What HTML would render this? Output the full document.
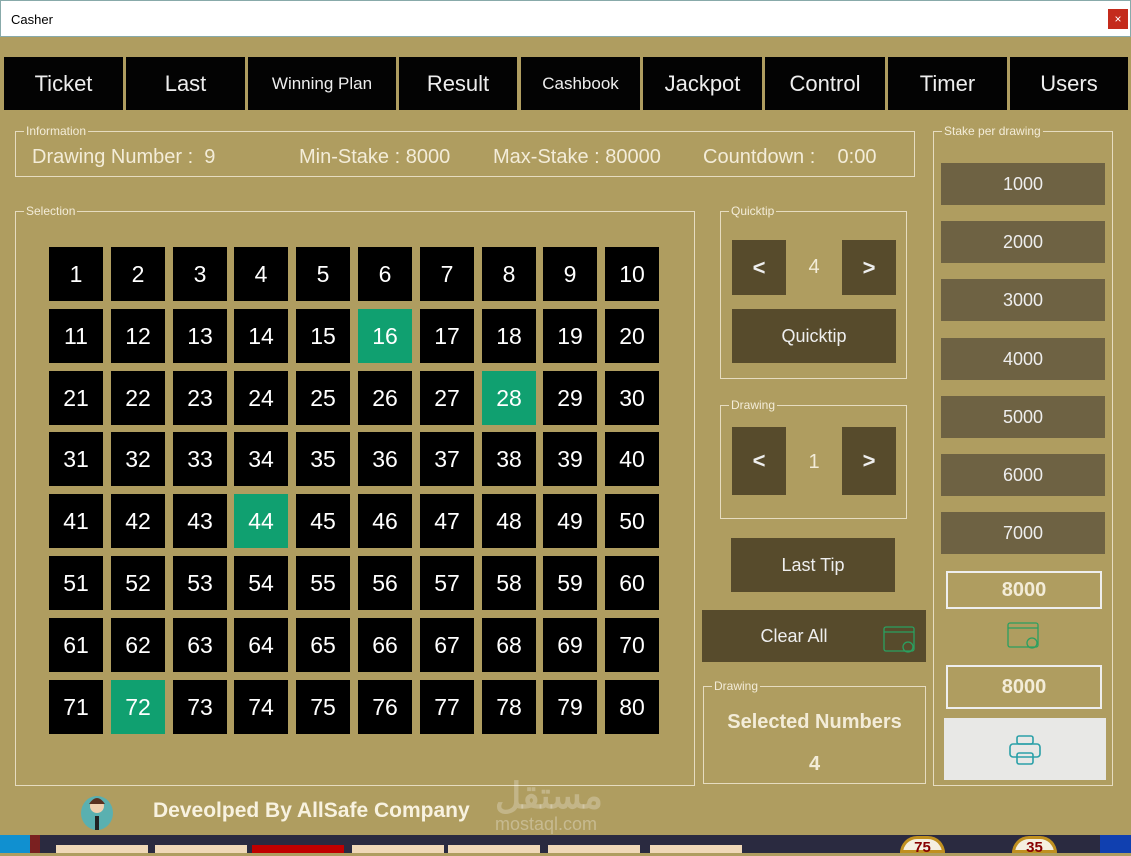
<!DOCTYPE html><html><head><style>
*{margin:0;padding:0;box-sizing:border-box}
body{width:1131px;height:853px;overflow:hidden;background:#af9d60;font-family:"Liberation Sans",sans-serif;position:relative;color:#f3ecd8}
.a{position:absolute}
.title{left:0;top:0;width:1131px;height:37px;background:#fff;border:1px solid #8aa;color:#000;font-size:13px;padding:11px 0 0 10px}
.x{left:1108px;top:9px;width:20px;height:20px;background:#c42b1c;color:#fff;font-size:12px;text-align:center;line-height:20px}
.tab{top:57px;height:53px;background:#030303;color:#eee;font-size:22px;display:flex;align-items:center;justify-content:center}
.box{border:1px solid #e6dcc0}
.lbl{background:#af9d60;font-size:12px;color:#f3ecd8;padding:0 2px;top:-8px;left:8px;position:absolute}
.c{width:54px;height:54px;background:#000;color:#fff;font-size:23px;display:flex;align-items:center;justify-content:center}
.g{background:#10a070}
.d{background:#574b2c;color:#eee;display:flex;align-items:center;justify-content:center;font-size:18px}
.s{background:#6e6243;color:#eee;display:flex;align-items:center;justify-content:center;font-size:18px;left:941px;width:164px;height:42px}
</style></head><body>
<div class="a title">Casher</div><div class="a x">×</div>
<div class="a tab" style="left:4px;width:119px">Ticket</div>
<div class="a tab" style="left:126px;width:119px">Last</div>
<div class="a tab" style="left:248px;width:148px;font-size:17px">Winning Plan</div>
<div class="a tab" style="left:399px;width:118px">Result</div>
<div class="a tab" style="left:521px;width:119px;font-size:17px">Cashbook</div>
<div class="a tab" style="left:643px;width:119px">Jackpot</div>
<div class="a tab" style="left:765px;width:120px">Control</div>
<div class="a tab" style="left:888px;width:119px">Timer</div>
<div class="a tab" style="left:1010px;width:118px">Users</div>

<div class="a box" style="left:15px;top:131px;width:900px;height:46px"><span class="lbl">Information</span>
<div class="a" style="left:16px;top:14px;font-size:20px;white-space:pre;word-spacing:0">Drawing Number :  9</div>
<div class="a" style="left:283px;top:14px;font-size:20px">Min-Stake : 8000</div>
<div class="a" style="left:477px;top:14px;font-size:20px">Max-Stake : 80000</div>
<div class="a" style="left:687px;top:14px;font-size:20px;white-space:pre">Countdown :    0:00</div></div>

<div class="a box" style="left:15px;top:211px;width:680px;height:575px"><span class="lbl">Selection</span></div>
<div id="grid"></div>

<div class="a box" style="left:720px;top:211px;width:187px;height:168px"><span class="lbl">Quicktip</span></div>
<div class="a d" style="left:732px;top:240px;width:54px;height:55px;font-size:22px;font-weight:bold">&lt;</div>
<div class="a" style="left:786px;top:256px;width:56px;text-align:center;font-size:20px">4</div>
<div class="a d" style="left:842px;top:240px;width:54px;height:55px;font-size:22px;font-weight:bold">&gt;</div>
<div class="a d" style="left:732px;top:309px;width:164px;height:54px">Quicktip</div>

<div class="a box" style="left:720px;top:405px;width:187px;height:114px"><span class="lbl">Drawing</span></div>
<div class="a d" style="left:732px;top:427px;width:54px;height:68px;font-size:22px;font-weight:bold">&lt;</div>
<div class="a" style="left:786px;top:451px;width:56px;text-align:center;font-size:20px">1</div>
<div class="a d" style="left:842px;top:427px;width:54px;height:68px;font-size:22px;font-weight:bold">&gt;</div>
<div class="a d" style="left:731px;top:538px;width:164px;height:54px">Last Tip</div>
<div class="a d" style="left:702px;top:610px;width:224px;height:52px;padding-right:40px">Clear All
<svg class="a" style="left:181px;top:16px" width="32" height="28" viewBox="0 0 32 28" fill="none" stroke="#2aa060" stroke-width="1.3"><rect x="1" y="1" width="30" height="24" rx="2"/><line x1="1" y1="6" x2="31" y2="6"/><circle cx="25" cy="21" r="5"/></svg></div>

<div class="a box" style="left:703px;top:686px;width:223px;height:98px"><span class="lbl">Drawing</span>
<div class="a" style="left:0;width:221px;top:24px;text-align:center;font-size:20px;font-weight:bold">Selected Numbers</div>
<div class="a" style="left:0;width:221px;top:66px;text-align:center;font-size:20px;font-weight:bold">4</div></div>

<div class="a box" style="left:933px;top:131px;width:180px;height:655px"><span class="lbl">Stake per drawing</span></div>
<div class="a s" style="top:163px">1000</div>
<div class="a s" style="top:221px">2000</div>
<div class="a s" style="top:279px">3000</div>
<div class="a s" style="top:338px">4000</div>
<div class="a s" style="top:396px">5000</div>
<div class="a s" style="top:454px">6000</div>
<div class="a s" style="top:512px">7000</div>
<div class="a" style="left:946px;top:571px;width:156px;height:38px;border:2px solid #eee;display:flex;align-items:center;justify-content:center;font-size:20px;font-weight:bold">8000</div>
<svg class="a" style="left:1007px;top:622px" width="32" height="28" viewBox="0 0 32 28" fill="none" stroke="#2aa060" stroke-width="1.3"><rect x="1" y="1" width="30" height="24" rx="2"/><line x1="1" y1="6" x2="31" y2="6"/><circle cx="25" cy="21" r="5"/></svg>
<div class="a" style="left:946px;top:665px;width:156px;height:44px;border:2px solid #eee;display:flex;align-items:center;justify-content:center;font-size:20px;font-weight:bold">8000</div>
<div class="a" style="left:944px;top:718px;width:162px;height:62px;background:#e8e8e6"><svg class="a" style="left:64px;top:16px" width="34" height="32" viewBox="0 0 34 32" fill="none" stroke="#2aa0a8" stroke-width="1.6"><rect x="9" y="2" width="16" height="8" rx="2"/><rect x="2" y="10" width="30" height="13" rx="3"/><rect x="9" y="19" width="16" height="11" rx="2"/></svg></div>

<svg class="a" style="left:80px;top:792px" width="34" height="38"><ellipse cx="17" cy="21" rx="16" ry="17" fill="#5ab0b0"/><circle cx="17" cy="14" r="7" fill="#f0d0b0"/><path d="M9 12 Q17 0 25 12" fill="#5a3020"/><rect x="15" y="24" width="4" height="14" fill="#222"/></svg>
<div class="a" style="left:153px;top:799px;font-size:21px;font-weight:bold;color:#f8f2e0">Deveolped By AllSafe Company</div>
<div class="a" style="left:495px;top:775px;font-size:36px;font-weight:bold;color:rgba(255,255,255,.25)">مستقل</div>
<div class="a" style="left:495px;top:814px;font-size:18px;color:rgba(255,255,255,.3)">mostaql.com</div>

<div class="a" style="left:0;top:835px;width:1131px;height:18px;background:#2a2a40"></div>
<div class="a" style="left:0;top:835px;width:30px;height:18px;background:#1090d0"></div>
<div class="a" style="left:30px;top:835px;width:10px;height:18px;background:#7a2020"></div>
<div class="a" style="left:56px;top:845px;width:92px;height:8px;background:#efd8b8"></div>
<div class="a" style="left:155px;top:845px;width:92px;height:8px;background:#efd8b8"></div>
<div class="a" style="left:252px;top:845px;width:92px;height:8px;background:#c00000"></div>
<div class="a" style="left:352px;top:845px;width:92px;height:8px;background:#efd8b8"></div>
<div class="a" style="left:448px;top:845px;width:92px;height:8px;background:#efd8b8"></div>
<div class="a" style="left:548px;top:845px;width:92px;height:8px;background:#efd8b8"></div>
<div class="a" style="left:650px;top:845px;width:92px;height:8px;background:#efd8b8"></div>
<div class="a" style="left:900px;top:836px;width:45px;height:17px;border-radius:22px 22px 0 0;background:#f5efe0;border:3px solid #c09020;color:#800;font-size:15px;font-weight:bold;text-align:center">75</div>
<div class="a" style="left:1012px;top:836px;width:45px;height:17px;border-radius:22px 22px 0 0;background:#f5efe0;border:3px solid #c09020;color:#800;font-size:15px;font-weight:bold;text-align:center">35</div>
<div class="a" style="left:1100px;top:835px;width:31px;height:18px;background:#1040b0"></div>
<script>
var h='',g={16:1,28:1,44:1,72:1};
for(var i=0;i<80;i++){var r=Math.floor(i/10),c=i%10;
h+='<div class="a c'+(g[i+1]?' g':'')+'" style="left:'+Math.round(49+c*61.8)+'px;top:'+Math.round(247+r*61.8)+'px">'+(i+1)+'</div>';}
document.getElementById('grid').outerHTML=h;
</script>
</body></html>
